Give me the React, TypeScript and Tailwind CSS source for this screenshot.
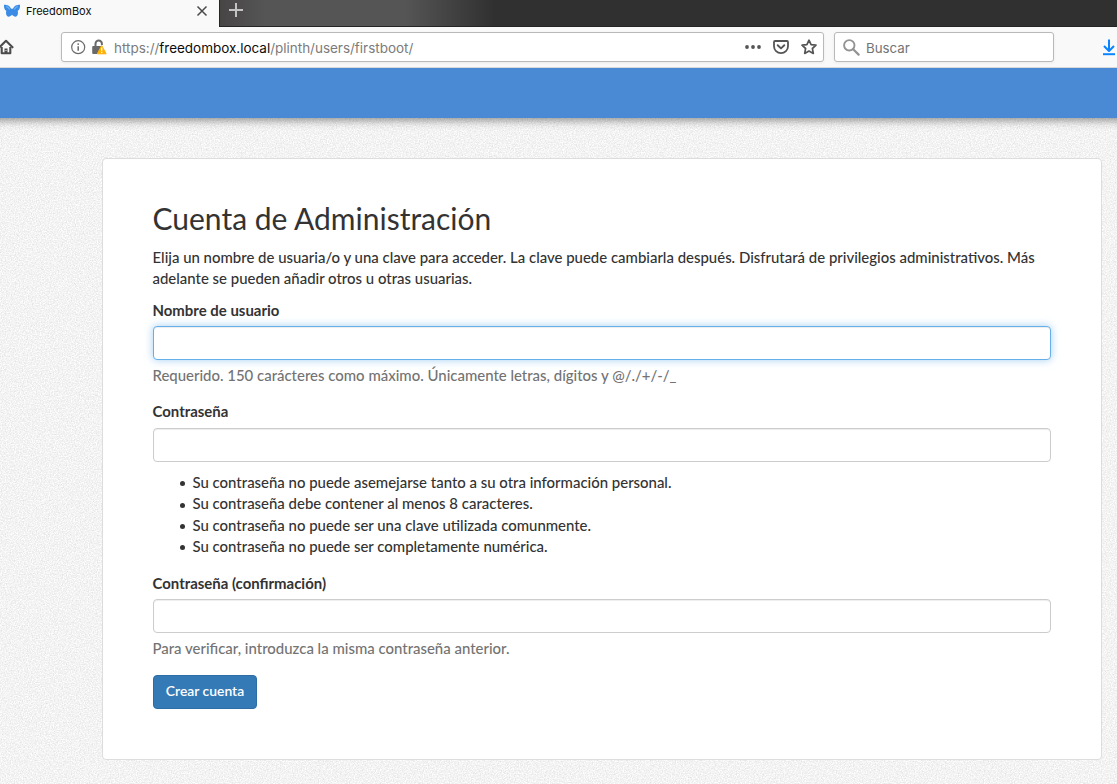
import React from "react";

function Butterfly() {
  return (
    <svg width="16" height="14" viewBox="0 0 16 14" className="shrink-0">
      <path
        d="M0 .8c2.600-.3 5.600.7 7 3.600.4.600 1.600.600 2 0C10.400 1.500 13.400.5 16 .8c.2 2.800-.6 5.200-2.400 6.300.7 1.200.5 3.400-.6 5-1.700 1.200-3.600.3-5-1.300-1.400 1.600-3.300 2.500-5 1.300-1.100-1.600-1.300-3.800-.6-5C.6 6-.2 3.600 0 .8z"
        fill="#3b8be6"
      />
      <path d="M2.200 2.400c1.800.4 2.800 1.400 3.500 3.100M13.800 2.400c-1.800.4-2.800 1.400-3.500 3.100" stroke="#66b4f5" strokeWidth="1.200" fill="none" />
    </svg>
  );
}

function TabStrip() {
  return (
    <div className="flex h-[27px]">
      <div className="flex w-[219px] items-start bg-[#f9f9fa] pl-1">
        <div className="flex h-[22px] w-full items-center">
          <Butterfly />
          <span className="ml-[6px] flex-1 pt-px text-[11px] text-[#0c0c0d]">FreedomBox</span>
          <svg width="12" height="12" viewBox="0 0 12 12" className="mr-[11px]">
            <path d="M1.500 1.500l9 9M10.500 1.500l-9 9" stroke="#4a4a4b" strokeWidth="1.500" />
          </svg>
        </div>
      </div>
      <div className="flex-1 border-b border-l border-[#252525] bg-[linear-gradient(90deg,#484545_0px,#555556_45px,#555556_185px,#303030_275px,#303030_100%)] pt-[3px] pl-[9px]">
        <svg width="14" height="14" viewBox="0 0 14 14">
          <path d="M7 0v14M0 7h14" stroke="#c4c4c4" strokeWidth="2" />
        </svg>
      </div>
    </div>
  );
}

function Toolbar() {
  return (
    <div className="flex h-[41px] border-b border-[#d8d8d9] bg-[#f9f9fa] pt-[5px]">
      <svg width="15" height="16" viewBox="0 0 15 16" className="mt-[7px] -ml-[1px] shrink-0">
        <path d="M.5 8.300L7 1.800l6.500 6.500" fill="none" stroke="#4b4b4c" strokeWidth="2.100" strokeLinecap="round" strokeLinejoin="round" />
        <path d="M2.700 8v6.300h8.600V8" fill="none" stroke="#4b4b4c" strokeWidth="2.100" strokeLinejoin="round" />
        <path d="M5.500 14V9.500h3V14" fill="#4b4b4c" />
        <path d="M7 11v1" stroke="#f9f9fa" strokeWidth="1" />
      </svg>
      <div className="ml-[47px] flex h-[30px] w-[763px] items-center rounded-[3px] border border-[#b9b9ba] bg-white pr-[6px] pl-[9px] shadow-[0_1px_3px_rgba(0,0,0,0.06)]">
        <svg width="15" height="15" viewBox="0 0 15 15" className="shrink-0">
          <circle cx="7.200" cy="7.200" r="6.500" fill="none" stroke="#6a6a6b" strokeWidth="1.200" />
          <path d="M7.200 6.300v4.500" stroke="#6a6a6b" strokeWidth="1.500" />
          <circle cx="7.200" cy="4.100" r=".9" fill="#6a6a6b" />
        </svg>
        <svg width="16" height="16" viewBox="0 0 16 16" className="ml-[6px] shrink-0">
          <path d="M3.500 8V4.700a3.200 3.200 0 016.400 0V6" fill="none" stroke="#6a6a6b" strokeWidth="2" />
          <path d="M1.200 7h8.600l-4.200 8H1.200a1 1 0 01-1-1V8a1 1 0 011-1z" fill="#6a6a6b" />
          <path d="M9.700 6.500l4.400 8.300H5.300z" fill="#ffb000" stroke="#ffb000" strokeWidth="1" strokeLinejoin="round" />
          <path d="M9.700 8.600v3.200M9.700 12.700v1.400" stroke="#fff" strokeWidth="1.300" />
        </svg>
        <span className="ml-[6px] flex-1 pt-[3px] text-[13.500px] tracking-[-0.02px] text-[#7b7b7c]">
          https://<span className="text-[#0c0c0d]">freedombox.local</span>/plinth/users/firstboot/
        </span>
        <svg width="16" height="16" viewBox="0 0 16 16">
          <g fill="#555556">
            <circle cx="2" cy="8" r="1.900" />
            <circle cx="8" cy="8" r="1.900" />
            <circle cx="14" cy="8" r="1.900" />
          </g>
        </svg>
        <svg width="16" height="16" viewBox="0 0 16 16" className="ml-3">
          <path d="M2 2h12a1 1 0 011 1v4.200a7 7 0 01-14 0V3a1 1 0 011-1z" fill="none" stroke="#555556" strokeWidth="1.800" />
          <path d="M4.700 6.200L8 9.400l3.300-3.200" fill="none" stroke="#555556" strokeWidth="1.900" strokeLinecap="round" strokeLinejoin="round" />
        </svg>
        <svg width="16" height="16" viewBox="0 0 16 16" className="ml-3">
          <path d="M8 1.200l2.100 4.400 4.900.6-3.600 3.300.9 4.900L8 12l-4.300 2.400.9-4.900L1 6.200l4.900-.6z" fill="none" stroke="#555556" strokeWidth="1.700" strokeLinejoin="round" />
        </svg>
      </div>
      <div className="ml-[10px] flex h-[30px] w-[220px] items-center rounded-[3px] border border-[#b9b9ba] bg-white pl-2 shadow-[0_1px_3px_rgba(0,0,0,0.06)]">
        <svg width="17" height="17" viewBox="0 0 17 17">
          <circle cx="6.300" cy="6.300" r="5.200" fill="none" stroke="#939394" strokeWidth="1.900" />
          <path d="M10.200 10.200l5.400 5.400" stroke="#939394" strokeWidth="2.200" strokeLinecap="round" />
        </svg>
        <span className="ml-[6px] pt-[3px] text-[13.300px] text-[#737374]">Buscar</span>
      </div>
      <svg width="14" height="17" viewBox="0 0 14 17" className="mt-[7px] ml-[48px] shrink-0">
        <path d="M7 .5v11M2 7l5 5 5-5" fill="none" stroke="#0a84ff" strokeWidth="2" strokeLinejoin="round" />
        <path d="M1 15.200h12" stroke="#0a84ff" strokeWidth="2" />
      </svg>
    </div>
  );
}

function Texture() {
  return (
    <svg className="absolute inset-0 h-full w-full" aria-hidden="true">
      <filter id="grain" x="0" y="0" width="100%" height="100%" colorInterpolationFilters="sRGB">
        <feTurbulence type="fractalNoise" baseFrequency="0.77" numOctaves="3" />
        <feColorMatrix values="0.18 0 0 0 0.863  0.18 0 0 0 0.863  0.18 0 0 0 0.863  0 0 0 0 1" />
      </filter>
      <rect width="100%" height="100%" filter="url(#grain)" />
    </svg>
  );
}

const field =
  "block h-[34px] w-full rounded-[4px] border bg-white px-3 outline-none";
const plain = "border-[#ccc] shadow-[inset_0_1px_1px_rgba(0,0,0,0.075)]";
const focused =
  "border-[#66afe9] shadow-[inset_0_1px_1px_rgba(0,0,0,0.075),0_0_8px_rgba(102,175,233,0.6)]";

const rules = [
  "Su contraseña no puede asemejarse tanto a su otra información personal.",
  "Su contraseña debe contener al menos 8 caracteres.",
  "Su contraseña no puede ser una clave utilizada comunmente.",
  "Su contraseña no puede ser completamente numérica.",
];

function AccountForm() {
  return (
    <form className="font-['Lato',sans-serif] text-[14.950px] leading-[21.430px] font-medium text-[#333]">
      <h1 className="mb-[11.500px] -ml-[0.500px] text-[30px] leading-[33px] font-normal">Cuenta de Administración</h1>
      <p className="mb-[11px] -ml-[0.500px]">
        Elija un nombre de usuaria/o y una clave para acceder. La clave puede cambiarla después. Disfrutará de privilegios
        administrativos. Más adelante se pueden añadir otros u otras usuarias.
      </p>
      <div className="mb-[15px]">
        <label htmlFor="username" className="mb-[4px] -ml-[0.500px] block font-bold">Nombre de usuario</label>
        <input id="username" className={`${field} ${focused}`} />
        <p className="mt-[5px] -ml-[0.500px] text-[#737373]">
          Requerido. 150 carácteres como máximo. Únicamente letras, dígitos y @/./+/-/_
        </p>
      </div>
      <div className="mb-[16px]">
        <label htmlFor="password" className="mb-[5px] -ml-[0.500px] block font-bold">Contraseña</label>
        <input id="password" type="password" className={`${field} ${plain}`} />
        <ul className="mt-[10px] pl-[26.500px]">
          {rules.map((r) => (
            <li key={r} className="flex items-center">
              <span className="mt-[2.500px] mr-2 size-[5px] rounded-full bg-[#333]" />
              {r}
            </li>
          ))}
        </ul>
      </div>
      <div className="mb-[15.500px]">
        <label htmlFor="confirm" className="mb-[4px] -ml-[0.500px] block font-bold">Contraseña (confirmación)</label>
        <input id="confirm" type="password" className={`${field} ${plain}`} />
        <p className="mt-[5px] -ml-[0.500px] text-[#737373]">Para verificar, introduzca la misma contraseña anterior.</p>
      </div>
      <button type="button" className="block h-[34px] w-[104px] rounded-[4px] border border-[#2e6da4] bg-[#337ab7] pb-[2px] text-[13.900px] leading-5 font-semibold text-white">
        Crear cuenta
      </button>
    </form>
  );
}

export default function App() {
  return (
    <div className="flex h-[784px] w-full flex-col overflow-hidden bg-[#f1f1f1] font-['Inter','Liberation_Sans',sans-serif]">
      <TabStrip />
      <Toolbar />
      <div className="relative flex-1 overflow-hidden">
        <Texture />
        <header className="relative -mx-4 h-[50px] bg-[#4a89d4] shadow-[0_2px_9px_rgba(0,0,0,0.45)]" />
        <main className="relative mt-10 ml-[102px] h-[602px] w-[1000px] rounded-[4px] border border-[#ddd] bg-white px-[50px] pt-[43px]">
          <AccountForm />
        </main>
      </div>
    </div>
  );
}
